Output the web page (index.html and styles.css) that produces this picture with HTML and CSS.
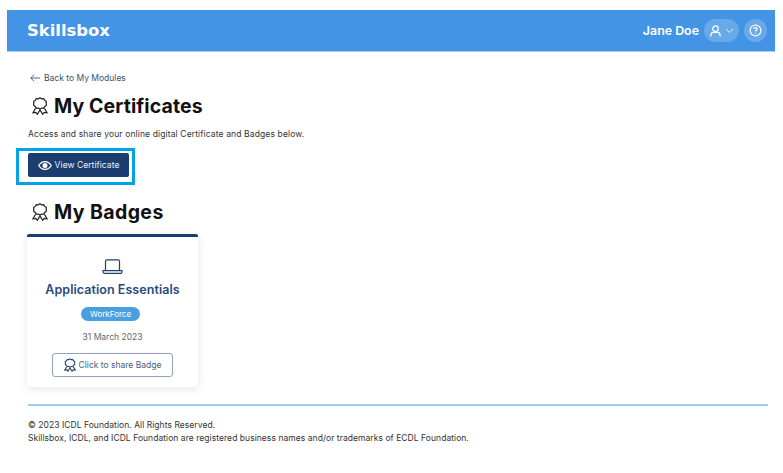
FILE: index.html
```html
<!DOCTYPE html>
<html lang="en">
<head>
<meta charset="utf-8">
<title>My Certificates</title>
<link rel="stylesheet" href="styles.css">
</head>
<body>
<div class="page">
  <header class="topbar">
    <span class="logo">Skillsbox</span>
    <div class="user">
      <span class="user-name">Jane Doe</span>
      <span class="user-pill">
        <svg class="ico" width="11" height="12" viewBox="0 0 12 13" fill="none" stroke="#fff" stroke-width="1.300"><circle cx="6" cy="4" r="3"/><path d="M1 12.500v-1.500C1 9.200 2.400 8 4 8h4c1.600 0 3 1.200 3 3v1.500"/></svg>
        <svg class="ico" width="9" height="6" viewBox="0 0 9 6" fill="none" stroke="#e3effb" stroke-width="1"><path d="M1 1l3.500 3.500L8 1"/></svg>
      </span>
      <span class="help">
        <svg class="ico" width="13" height="13" viewBox="0 0 14 14" fill="none" stroke="#fff" stroke-width="1.300"><circle cx="7" cy="7" r="5.800"/><path d="M5.200 5.500C5.200 4.500 6 4 7 4s1.800.6 1.800 1.500c0 1.400-1.800 1.300-1.800 2.700"/><path d="M7 9.400v1"/></svg>
      </span>
    </div>
  </header>

  <main class="content">
    <a class="back" href="#">
      <svg class="ico" width="10" height="8" viewBox="0 0 10 8" fill="none" stroke="#1f3f72" stroke-width=".8"><path d="M10 4H.8M4 .7L.8 4 4 7.300"/></svg>
      Back to My Modules
    </a>
    <h1 class="heading heading-first">
      <svg class="ico" width="16" height="18" viewBox="0 0 16 18" fill="none" stroke="#222" stroke-width="1.200"><path d="M8 .8l1.700 1 2-.1 1 1.700 1.600 1-.1 2 .1 2-1.600 1-1 1.700-2-.1-1.700 1-1.700-1-2 .1-1 -1.700-1.600-1 .1-2-.1-2 1.600-1 1-1.700 2 .1z"/><path d="M3.600 11.300L1 15.800l2.800-.4L5.300 17.300 8 13l2.700 4.300 1.500-1.900 2.800.4-2.600-4.500"/></svg>
      My Certificates
    </h1>
    <p class="intro">Access and share your online digital Certificate and Badges below.</p>
    <div class="highlight">
      <button class="view-btn">
        <svg class="ico" width="14" height="9" viewBox="0 0 14 9"><path fill="#fff" fill-rule="evenodd" d="M7 0c3 0 5.500 1.800 7 4.500C12.500 7.200 10 9 7 9S1.500 7.200 0 4.500C1.500 1.800 4 0 7 0zm0 1.200c-2.300 0-4.300 1.300-5.600 3.300C2.700 6.500 4.700 7.800 7 7.800s4.300-1.300 5.600-3.300C11.300 2.500 9.300 1.200 7 1.200zM7 2a2.500 2.500 0 1 1 0 5 2.500 2.500 0 0 1 0-5z"/></svg>
        View Certificate
      </button>
    </div>
    <h1 class="heading heading-second">
      <svg class="ico" width="16" height="18" viewBox="0 0 16 18" fill="none" stroke="#222" stroke-width="1.200"><path d="M8 .8l1.700 1 2-.1 1 1.700 1.600 1-.1 2 .1 2-1.600 1-1 1.700-2-.1-1.700 1-1.700-1-2 .1-1 -1.700-1.600-1 .1-2-.1-2 1.600-1 1-1.700 2 .1z"/><path d="M3.600 11.300L1 15.800l2.800-.4L5.300 17.300 8 13l2.700 4.300 1.500-1.900 2.800.4-2.600-4.500"/></svg>
      My Badges
    </h1>
    <article class="card">
      <svg class="ico card-icon" width="21" height="16" viewBox="0 0 21 16" fill="none" stroke="#1f3f72" stroke-width="1.200"><path d="M3.500 11V2.200c0-.8.500-1.400 1.300-1.400h11.400c.8 0 1.300.6 1.300 1.400V11"/><path d="M1 11.600h19v1.200c0 .9-.7 1.600-1.600 1.600H2.600c-.9 0-1.600-.7-1.600-1.600z"/></svg>
      <h2 class="card-title">Application Essentials</h2>
      <span class="tag">WorkForce</span>
      <span class="date">31 March 2023</span>
      <button class="share-btn">
        <svg class="ico" width="12" height="14" viewBox="0 0 16 18" fill="none" stroke="#1f3f72" stroke-width="1.400"><path d="M8 .8l1.700 1 2-.1 1 1.700 1.600 1-.1 2 .1 2-1.600 1-1 1.700-2-.1-1.700 1-1.700-1-2 .1-1 -1.700-1.600-1 .1-2-.1-2 1.600-1 1-1.700 2 .1z"/><path d="M3.600 11.300L1 15.800l2.800-.4L5.300 17.300 8 13l2.700 4.300 1.500-1.900 2.800.4-2.600-4.500"/></svg>
        Click to share Badge
      </button>
    </article>
  </main>

  <footer class="footer">
    <p>© 2023 ICDL Foundation. All Rights Reserved.</p>
    <p>Skillsbox, ICDL, and ICDL Foundation are registered business names and/or trademarks of ECDL Foundation.</p>
  </footer>
</div>
</body>
</html>
```
FILE: styles.css
```css
* { box-sizing: border-box; }
html, body { margin: 0; padding: 0; background: #fff; }
body { font-family: "Inter", "Liberation Sans", sans-serif; color: #222; overflow: hidden; }
.page { width: 783px; height: 473px; padding: 10px 8px 0 7px; }
.ico { display: block; flex: none; }
.topbar { height: 42px; background: #4394e5; border-bottom: 1px solid #a9cdf2; display: flex; align-items: center; justify-content: space-between; padding: 0 8px 0 20px; }
.logo { font-family: "DejaVu Sans", sans-serif; font-weight: 700; font-size: 16.400px; color: #fff; }
.user { display: flex; align-items: center; gap: 5px; }
.user-name { font-size: 12.400px; font-weight: 600; color: #fff; }
.user-pill { width: 35px; height: 23px; border-radius: 12px; background: #68a9ea; display: flex; align-items: center; justify-content: center; gap: 4px; }
.help { width: 23px; height: 23px; border-radius: 50%; background: #68a9ea; display: flex; align-items: center; justify-content: center; }
.content { padding: 20px 0 0 21px; height: 352px; }
.back { display: flex; align-items: center; gap: 4px; font-size: 8.500px; line-height: 12px; color: #3a4f6e; text-decoration: none; margin-left: 2px; }
.heading { display: flex; align-items: center; gap: 6px; margin: 0 0 0 4px; font-size: 19.500px; line-height: 24px; font-weight: 700; color: #111; letter-spacing: .1px; }
.heading-first { margin-top: 10px; }
.intro { margin: 10px 0 0; font-size: 8.500px; line-height: 12px; color: #333; letter-spacing: .13px; }
.highlight { width: 119px; height: 37px; margin: 8px 0 0 -12px; border: 3px solid #00a4e4; padding: 2px 0 0 9px; }
.view-btn { width: 101px; height: 24px; border: 0; border-radius: 2px; background: #1c3d70; color: #e9edf3; font-family: inherit; font-size: 8.500px; letter-spacing: .05px; display: flex; align-items: center; justify-content: center; gap: 3px; padding: 0; }
.heading-second { margin-top: 15px; letter-spacing: .4px; }
.card { width: 171px; height: 153px; margin-top: 10px; margin-left: -1px; border-top: 3px solid #1c3d70; border-radius: 2px; background: #fff; box-shadow: 0 2px 8px rgba(0,0,0,.1); display: flex; flex-direction: column; align-items: center; padding-top: 22px; }
.card-title { margin: 7px 0 0; font-size: 12.500px; line-height: 16px; font-weight: 600; color: #2a4a7c; letter-spacing: .05px; }
.tag { margin: 9px 4px 0 0; width: 59px; height: 14px; border-radius: 7px; background: #4a9fe0; color: #fff; font-size: 8px; line-height: 14px; text-align: center; }
.date { margin-top: 10px; font-size: 8.500px; line-height: 12px; color: #666; }
.share-btn { margin-top: 10px; width: 121px; height: 24px; border: 1px solid #8fa3c0; border-radius: 3px; background: #fff; color: #4a607f; font-family: inherit; font-size: 8.500px; display: flex; align-items: center; justify-content: center; gap: 3px; padding: 0; }
.footer { margin: 0 7px 0 21px; border-top: 2px solid #a3ccf3; padding-top: 13px; font-size: 8.500px; line-height: 13px; color: #333; letter-spacing: .05px; }
.footer p { margin: 0; }
```
